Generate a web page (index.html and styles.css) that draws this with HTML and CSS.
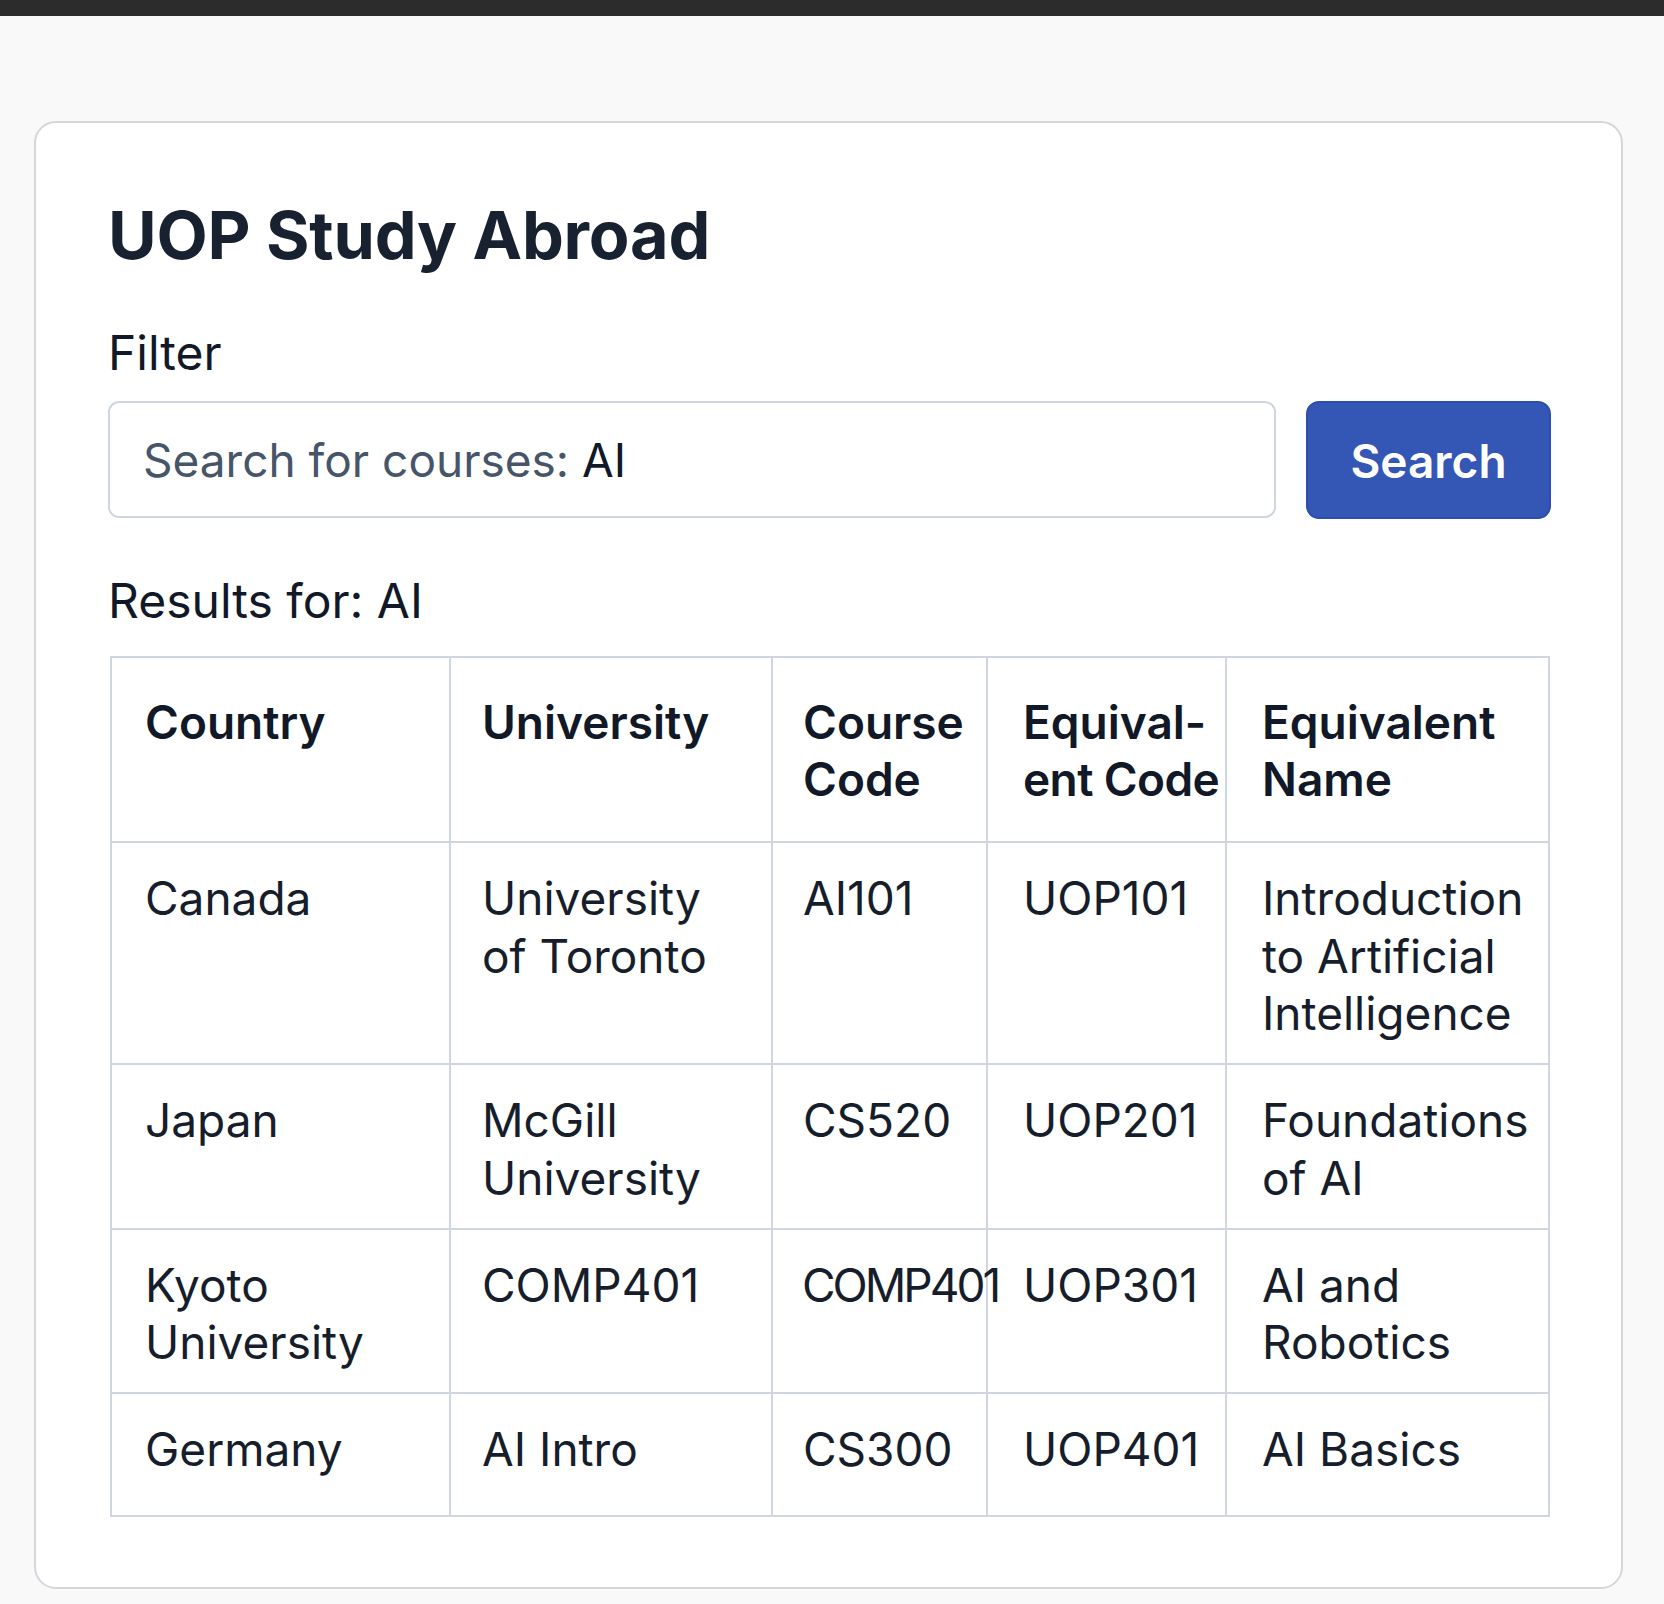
FILE: index.html
```html
<!DOCTYPE html>
<html lang="en">
<head>
<meta charset="utf-8">
<title>UOP Study Abroad</title>
<link rel="stylesheet" href="styles.css">
</head>
<body>
<div class="topbar"></div>
<main class="page">
  <section class="card">
    <h1 class="title">UOP Study Abroad</h1>
    <label class="filter-label" for="q">Filter</label>
    <div class="filter-row">
      <div class="search-box" id="q" role="textbox"><span class="ph">Search for courses:</span> <span class="val">AI</span></div>
      <button class="search-btn" type="button">Search</button>
    </div>
    <p class="results">Results for: AI</p>
    <table class="courses">
      <colgroup>
        <col class="c1"><col class="c2"><col class="c3"><col class="c4"><col class="c5">
      </colgroup>
      <thead>
        <tr>
          <th>Country</th>
          <th>University</th>
          <th>Course Code</th>
          <th>Equival-<br><span class="nw">ent Code</span></th>
          <th>Equivalent Name</th>
        </tr>
      </thead>
      <tbody>
        <tr>
          <td>Canada</td>
          <td>University of Toronto</td>
          <td>AI101</td>
          <td>UOP101</td>
          <td>Introduction to Artificial Intelligence</td>
        </tr>
        <tr>
          <td>Japan</td>
          <td>McGill University</td>
          <td>CS520</td>
          <td>UOP201</td>
          <td>Foundations of AI</td>
        </tr>
        <tr>
          <td>Kyoto University</td>
          <td>COMP401</td>
          <td class="tight">COMP401</td>
          <td>UOP301</td>
          <td>AI and Robotics</td>
        </tr>
        <tr class="last">
          <td>Germany</td>
          <td>AI Intro</td>
          <td>CS300</td>
          <td>UOP401</td>
          <td>AI Basics</td>
        </tr>
      </tbody>
    </table>
  </section>
</main>
</body>
</html>
```

FILE: styles.css
```css
* { box-sizing: border-box; }

html, body {
  margin: 0;
  padding: 0;
  background: #f9f9fa;
  font-family: Inter, "Noto Sans", "Liberation Sans", sans-serif;
  color: #111827;
}

.topbar {
  height: 16px;
  background: #2c2c2c;
}

.page {
  padding: 105px 41px 0 34px;
}

.card {
  background: #ffffff;
  border: 2px solid #d3d6db;
  border-radius: 22px;
  padding: 73px 73px 70px 72px;
}

.title {
  margin: 0;
  font-size: 66.5px;
  line-height: 1.2;
  font-weight: 700;
  color: #18212f;
  letter-spacing: -0.2px;
}

.filter-label {
  display: block;
  margin-top: 53px;
  font-size: 48px;
  line-height: 48px;
  color: #111827;
}

.filter-row {
  display: flex;
  gap: 30px;
  margin: 24px -3px 0 0;
}

.search-box {
  flex: 1;
  height: 117px;
  padding: 0 0 0 33px;
  border: 2px solid #cdd5df;
  border-radius: 11px;
  background: #fff;
  font-size: 46px;
  line-height: 114px;
  white-space: nowrap;
}

.search-box .ph { color: #475569; }
.search-box .val { color: #111827; }

.search-btn {
  width: 245px;
  height: 118px;
  border: 2px solid #2d4ead;
  border-radius: 13px;
  background: #3456b5;
  color: #ffffff;
  font-family: inherit;
  font-size: 46px;
  font-weight: 600;
  padding: 2px 0 0;
}

.results {
  margin: 58px 0 0;
  font-size: 48px;
  line-height: 48px;
  color: #111827;
}

.courses {
  margin: 31px 0 0 2px;
  width: 100%;
  table-layout: fixed;
  border-collapse: collapse;
  font-size: 46px;
  line-height: 57.3px;
  color: #111827;
}

.courses col.c1 { width: 339px; }
.courses col.c2 { width: 322px; }
.courses col.c3 { width: 215px; }
.courses col.c4 { width: 239px; }
.courses col.c5 { width: 323px; }

.courses th,
.courses td {
  border: 2px solid #cfd6e0;
  text-align: left;
  vertical-align: top;
  padding: 27px 12px 21px 35px;
}

.courses th {
  font-weight: 600;
  padding-top: 36px;
  padding-right: 4px;
  padding-bottom: 33px;
}

.courses th:nth-child(1),
.courses td:nth-child(1) { padding-left: 33px; }

.courses th:nth-child(2),
.courses td:nth-child(2) { padding-left: 31px; padding-right: 26px; }

.courses th:nth-child(3),
.courses td:nth-child(3) { padding-left: 30px; }

.courses th .nw {
  white-space: nowrap;
  letter-spacing: -0.6px;
}

.courses td {
  font-weight: 400;
  color: #161d2b;
}

.courses td.tight {
  padding-left: 29px;
  letter-spacing: -3px;
}

.courses tr.last td {
  padding-bottom: 36px;
}
```
